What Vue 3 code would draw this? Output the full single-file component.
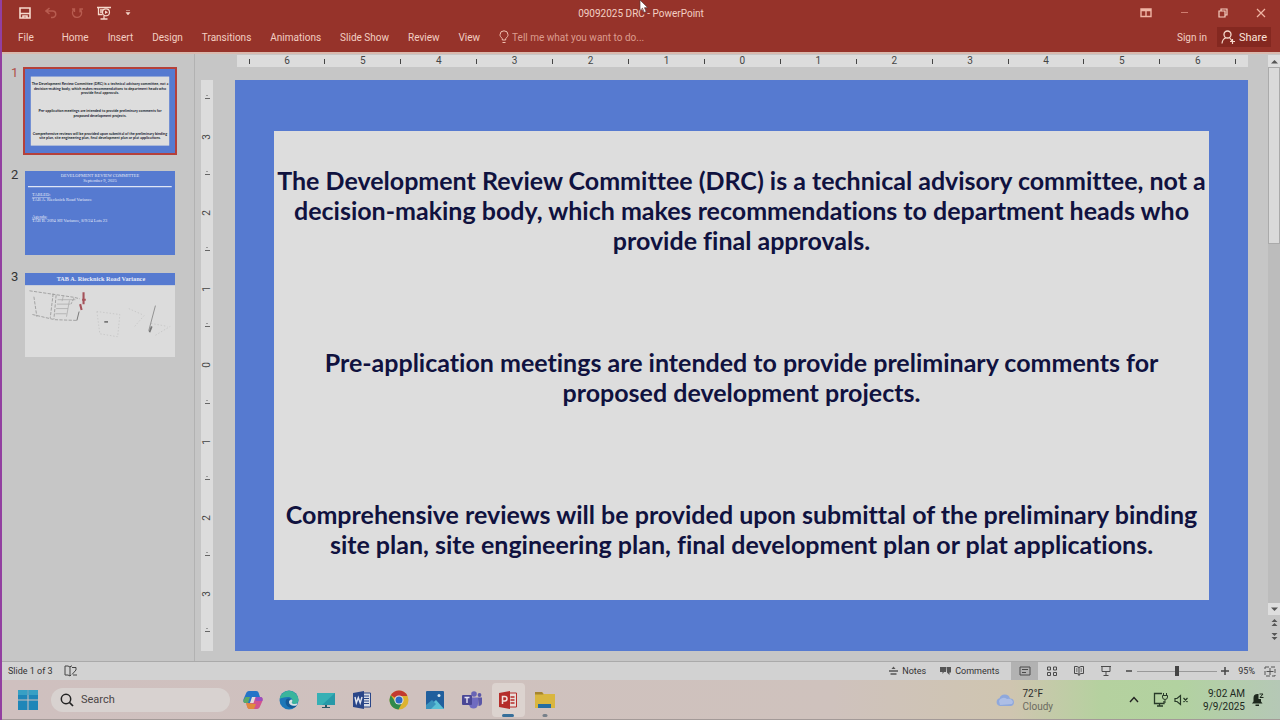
<template>
  <div class="screen">
    <header class="ribbon">
      <div class="titlebar">
        <div class="quick">
          <button aria-label="Save">
            <svg width="12" height="12" viewBox="0 0 12 12"><path d="M1 1h10v10H1z" fill="none" stroke="#f6d9cc" stroke-width="1.600" /><path d="M1 6.500h10M4 11V9h4v2" fill="none" stroke="#f6d9cc" stroke-width="1.600" /></svg>
          </button>
          <button aria-label="Undo">
            <svg width="12" height="12" viewBox="0 0 12 12"><path d="M4.500 1L1 4l3.500 3M1 4h6.500a3 3 0 0 1 0 6.500H6" fill="none" stroke="#b85c50" stroke-width="1.500" /></svg>
          </button>
          <button aria-label="Repeat">
            <svg width="12" height="12" viewBox="0 0 12 12"><path d="M3.500 2A4.600 4.600 0 1 0 9 2.300M9 5.500V2h3M3.500 5V2H1" fill="none" stroke="#b85c50" stroke-width="1.300" /></svg>
          </button>
          <button aria-label="Start from beginning">
            <svg width="14" height="14" viewBox="0 0 14 14"><path d="M0 1.500h14M1.500 2v6.500h4M7 10v2.500M3.500 13h7M3 4h4M3 6h2" fill="none" stroke="#f6d9cc" stroke-width="1.300" /><circle cx="9" cy="6.300" r="3.500" fill="#96332a" stroke="#f6d9cc" stroke-width="1.200" /><path d="M8 4.500l3 1.800-3 1.800z" fill="#f6d9cc" /></svg>
          </button>
          <button aria-label="Customize toolbar">
            <svg width="6" height="6" viewBox="0 0 6 6"><path d="M1 .5h4M1 2.500h4L3 5z" fill="#f6d9cc" stroke="#f6d9cc" stroke-width=".5" /></svg>
          </button>
        </div>
        <h1>09092025 DRC - PowerPoint</h1>
        <div class="window-buttons">
          <button aria-label="Ribbon display options">
            <svg width="12" height="10" viewBox="0 0 12 10"><path d="M1 1h10v7.500H1zM1 2.500h10M6 3v6" fill="none" stroke="#f0b5a5" stroke-width="1.400" /></svg>
          </button>
          <button aria-label="Minimize">
            <svg width="10" height="10" viewBox="0 0 10 10"><path d="M1 4.500h7" stroke="#cf7d70" /></svg>
          </button>
          <button aria-label="Restore">
            <svg width="10" height="10" viewBox="0 0 10 10"><path d="M1 3h6v6H1zM3 3V1h6v6H7" fill="none" stroke="#f6d0c2" stroke-width="1.200" /></svg>
          </button>
          <button aria-label="Close">
            <svg width="10" height="10" viewBox="0 0 10 10"><path d="M1 1l8 8M9 1L1 9" stroke="#f0b5a5" stroke-width="1.200" /></svg>
          </button>
        </div>
      </div>
      <nav class="tabs">
        <button v-for="tab in tabs" :key="tab" class="tab">{{ tab }}</button>
        <label class="tell">
          <svg width="10" height="14" viewBox="0 0 10 14"><path d="M3.300 10V8.500C1.500 7 1 6 1 4.800a4 4 0 0 1 8 0C9 6 8.500 7 6.700 8.500V10zM3.500 12.500h3" fill="none" stroke="#f0c0b0" /></svg>
          <input type="text" placeholder="Tell me what you want to do..." />
        </label>
        <button class="tab">Sign in</button>
        <button class="share">
          <svg width="15" height="14" viewBox="0 0 15 14"><circle cx="6.500" cy="4.500" r="3.500" fill="none" stroke="#f6d9cc" stroke-width="1.300" /><path d="M1 13.500c.3-3 1.800-5 4-5.700M8.500 7.500L11 11M9 11.500h5M11.500 9v5" fill="none" stroke="#f6d9cc" stroke-width="1.200" /></svg>
          Share
        </button>
      </nav>
      <svg class="cursor" width="9" height="14" viewBox="0 0 9 14"><path d="M1 0v10.500l2.500-2.200L5.200 12.500l2-.9L5.500 7.700H8.800z" fill="#fff" stroke="#5b3a38" stroke-width=".7" /></svg>
    </header>

    <main class="workspace">
      <aside class="thumbs">
        <div class="thumb-row">
          <span>1</span>
          <button class="thumb active" aria-label="Slide 1">
            <svg viewBox="0 0 1012 568">
              <rect width="1012" height="568" fill="#567ad0" />
              <rect x="39" y="51" width="934" height="466" fill="#dddddd" />
              <g class="mini-text">
                <text v-for="line in miniLines" :key="line.text" x="506" :y="line.y">{{ line.text }}</text>
              </g>
            </svg>
          </button>
        </div>
        <div class="thumb-row">
          <span>2</span>
          <button class="thumb" aria-label="Slide 2">
            <svg viewBox="0 0 1012 568">
              <rect width="1012" height="568" fill="#567ad0" />
              <g class="mini-serif">
                <text x="506" y="38" text-anchor="middle">DEVELOPMENT REVIEW COMMITTEE</text>
                <text x="506" y="76" text-anchor="middle">September 9, 2025</text>
                <text x="48" y="170" text-decoration="underline">TABLED:</text>
                <text x="48" y="202">TAB A. Riecknick Road Variance</text>
                <text x="48" y="315" text-decoration="underline">Agenda:</text>
                <text x="48" y="346">TAB B. 2094 SH Variance, 8/9/24 Lots 23</text>
              </g>
              <path d="M20 106h970" stroke="#dfe5f5" stroke-width="8" />
            </svg>
          </button>
        </div>
        <div class="thumb-row">
          <span>3</span>
          <button class="thumb" aria-label="Slide 3">
            <svg viewBox="0 0 1012 568">
              <rect width="1012" height="568" fill="#dcdcdc" />
              <rect width="1012" height="82" fill="#567ad0" />
              <text class="mini-title" x="512" y="56">TAB A.  Riecknick Road Variance</text>
              <g fill="none" stroke="#8f8f8f" stroke-width="5">
                <path d="M30 120l150 22 150 22 40 10M60 160l20 135M50 280l150 35 155 5M190 140l-20 165M210 150l-15 160M330 170l-20 40" stroke-dasharray="22 9" />
                <path d="M220 180h120M215 210h90M210 240h80M205 275h75M260 150l-10 40M300 185l-20 110" stroke="#aaa" />
                <path d="M485 260l20 150 120 20 15-150zM700 240l90 40M740 360l70-80M850 340l110 20M880 420l100-60" stroke="#c2c2c2" stroke-dasharray="10 12" />
                <path d="M880 220l-45 170" stroke="#777" />
                <path d="M365 260l-15 60" stroke="#555" />
              </g>
              <path d="M395 130v80M385 180h25M372 210l10 40" stroke="#a5525a" stroke-width="14" fill="none" />
              <path d="M535 330h25M855 360l-15 40" stroke="#777" stroke-width="12" />
            </svg>
          </button>
        </div>
      </aside>

      <section class="editor">
        <div class="ruler-h">
          <span v-for="(mark, i) in hMarks" :key="i" :class="{ tick: mark === '' }">{{ mark }}</span>
        </div>
        <div class="ruler-v">
          <span v-for="(mark, i) in vMarks" :key="i" :class="{ tick: mark === '' }">{{ mark }}</span>
        </div>
        <article class="slide">
          <div class="paper">
            <p v-for="(lines, i) in paragraphs" :key="i">
              <template v-for="(line, j) in lines" :key="j"><br v-if="j" />{{ line }}</template>
            </p>
          </div>
        </article>
      </section>

      <div class="scroll">
        <button aria-label="Scroll up"><svg width="7" height="5" viewBox="0 0 7 5"><path d="M0 4.500h7L3.500 1z" fill="#555" /></svg></button>
        <div class="track"><div class="handle"></div></div>
        <button aria-label="Scroll down"><svg width="7" height="5" viewBox="0 0 7 5"><path d="M0 .5h7L3.500 4z" fill="#555" /></svg></button>
        <button class="flat" aria-label="Previous slide"><svg width="7" height="9" viewBox="0 0 7 9"><path d="M.5 4L3.500 1l3 3zM.5 8l3-3 3 3z" fill="#555" /></svg></button>
        <button class="flat" aria-label="Next slide"><svg width="7" height="9" viewBox="0 0 7 9"><path d="M.5 1l3 3 3-3zM.5 5l3 3 3-3z" fill="#555" /></svg></button>
      </div>
    </main>

    <footer class="status">
      <span>Slide 1 of 3</span>
      <button aria-label="Spelling">
        <svg width="14" height="12" viewBox="0 0 14 12"><path d="M6 2L4 1H1v9h3l2 1V2l1-1h1M6 11l1-1M8 2.500h4v2.500L8 9.500M9 10h4" fill="none" stroke="#444" /></svg>
      </button>
      <div class="push"></div>
      <button class="text-btn">
        <svg width="9" height="10" viewBox="0 0 9 10"><path d="M0 5h9M1.500 8h6" stroke="#555" stroke-width="1.300" /><path d="M2.500 3h4L4.500.5z" fill="#555" /></svg>
        Notes
      </button>
      <button class="text-btn comments">
        <svg width="11" height="10" viewBox="0 0 11 10"><path d="M0 1h6v5H4L2.500 8V6H0zM6.500 1H11v5.500H9.500v2.500L7 6.500z" fill="#555" /></svg>
        Comments
      </button>
      <div class="views">
        <button class="on" aria-label="Normal"><svg width="12" height="12" viewBox="0 0 12 12"><path d="M1 2h10v8H1zM3 4.500h6M3 7.500h4" fill="none" stroke="#4a4a4a" /></svg></button>
        <button aria-label="Slide sorter"><svg width="12" height="12" viewBox="0 0 12 12"><path d="M1.500 2h3v3h-3zM7.500 2h3v3h-3zM1.500 7.500h3v3h-3zM7.500 7.500h3v3h-3z" fill="none" stroke="#4a4a4a" /></svg></button>
        <button aria-label="Reading view"><svg width="12" height="12" viewBox="0 0 12 12"><path d="M6 2.500L4 1.500H1.500v7H4l2 1 2-1h2.500v-7H8zM6 2.500V11M3 4h1.500M3 6h1.500M7.500 4H9M7.500 6H9" fill="none" stroke="#4a4a4a" /></svg></button>
        <button aria-label="Slide show"><svg width="12" height="12" viewBox="0 0 12 12"><path d="M1 1.500h10M2 2v4.500h8V2M6 6.500v4M3.500 10.500h5" fill="none" stroke="#4a4a4a" /></svg></button>
      </div>
      <div class="zoom">
        <button aria-label="Zoom out"><svg width="8" height="8" viewBox="0 0 8 8"><path d="M1 4h6" stroke="#444" stroke-width="1.500" /></svg></button>
        <input v-model="zoom" type="range" min="0" max="190" aria-label="Zoom" />
        <button aria-label="Zoom in"><svg width="8" height="8" viewBox="0 0 8 8"><path d="M0 4h8M4 0v8" stroke="#444" stroke-width="1.500" /></svg></button>
        <span class="percent">{{ zoom }}%</span>
        <button aria-label="Fit slide"><svg width="12" height="11" viewBox="0 0 12 11"><path d="M1 1h10v9H1z" fill="none" stroke="#555" stroke-dasharray="4 2" /><path d="M6 2v7M2.500 5.500h7" stroke="#555" /></svg></button>
      </div>
    </footer>

    <div class="taskbar">
      <button class="app" aria-label="Start">
        <svg width="20" height="20" viewBox="0 0 20 20"><path d="M0 0h9.500v9.500H0zM10.500 0H20v9.500h-9.500zM0 10.500h9.500V20H0zM10.500 10.500H20V20h-9.500z" fill="#1f86b8" /><path d="M0 0h9.500v5H0zM10.500 0H20v5h-9.500z" fill="#38a0c4" /></svg>
      </button>
      <label class="search">
        <svg width="14" height="14" viewBox="0 0 14 14"><circle cx="6" cy="6" r="4.700" fill="none" stroke="#222" stroke-width="1.500" /><path d="M9.500 9.500L13 13" stroke="#222" stroke-width="1.700" /></svg>
        <input type="text" placeholder="Search" />
      </label>
      <div class="apps">
        <button class="app" aria-label="Copilot">
          <svg width="20" height="20" viewBox="0 0 20 20"><path d="M6 1h7c2 0 2.500 1 3 3l1 3h-4L8 13H2.500C.5 13 0 11 .6 9L3 3.500C3.500 2 4.500 1 6 1z" fill="#2474c8" /><path d="M2.500 7L.6 10c-.6 2 0 3 1.900 3H5l2-6z" fill="#5ca868" /><path d="M14 19H7c-2 0-2.500-1-3-3l-.8-3h4L12 7h5.500c2 0 2.500 2 1.900 4L17 16.500C16.500 18 15.500 19 14 19z" fill="#d15390" /><path d="M3.200 13c.8 4 1.300 6 3.800 6h4l2-5z" fill="#e08a3c" /><path d="M13 7h4.500c2 0 2.500 2 1.900 4h-7z" fill="#9a4fc0" /><path d="M9 7h3.500l-2 6H7z" fill="#e6dcdc" /></svg>
        </button>
        <button class="app" aria-label="Edge">
          <svg width="20" height="20" viewBox="0 0 20 20"><circle cx="10" cy="10" r="9.500" fill="#1c77b8" /><path d="M.6 9A9.500 9.500 0 0 1 19.500 10c0 3-2.500 4.500-5 4-2-.4-2-1.500-1.300-2.500C14 9.500 12.500 7 9 7 5 7 2 8 .6 9z" fill="#3bb59c" /><path d="M7 10c-1.500 4 1.500 8 6 8 2 0 4-1 5-3-4 2-8 0-8-3 0-1.500 1-2 2-2.500C10.500 8 8 8 7 10z" fill="#155a96" /><path d="M10 12c0-1.500 1-2 2-2.500 1.300.3 1.800 1.200 1.200 2-.7 1-.7 2.100 1.300 2.500 1.500.3 3 0 4-1l-.7 2.200C14.500 16.500 10 15.500 10 12z" fill="#d8e3e3" /></svg>
        </button>
        <button class="app" aria-label="Remote desktop">
          <svg width="20" height="20" viewBox="0 0 20 20"><path d="M1 3h18v12H1z" fill="#2799a8" /><path d="M1 3h18L6 15H1z" fill="#36b0b5" /><path d="M9 15h2v2h3v1H6v-1h3z" fill="#2a5667" /></svg>
        </button>
        <button class="app" aria-label="Word">
          <svg width="20" height="20" viewBox="0 0 20 20"><path d="M10 3h8.500v14H10z" fill="#d9dde6" stroke="#2a4688" /><path d="M12 6h5M12 8.500h5M12 11h5M12 13.500h5" stroke="#2a4688" /><path d="M1 3l11-2v18L1 17z" fill="#2a4688" /><path d="M3 7l1.300 6L6.300 7.500 8.200 13 10 7" fill="none" stroke="#e4e7f0" stroke-width="1.400" /></svg>
        </button>
        <button class="app" aria-label="Chrome">
          <svg width="20" height="20" viewBox="0 0 20 20"><circle cx="10" cy="10" r="9.500" fill="#dcb32f" /><path d="M10 10L1.800 5.200A9.500 9.500 0 0 1 18.200 5.200L18 6h-8z" fill="#c23a30" /><path d="M1.800 5.200A9.500 9.500 0 0 0 9.500 19.500L13.500 12 10 10 6.500 12z" fill="#318a4c" /><circle cx="10" cy="10" r="4.600" fill="#e2e2e2" /><circle cx="10" cy="10" r="3.500" fill="#2c69c4" /></svg>
        </button>
        <button class="app" aria-label="Photos">
          <svg width="20" height="20" viewBox="0 0 20 20"><rect x="1" y="1" width="18" height="18" rx="1" fill="#215f9d" /><path d="M1 19l10-9 8 9z" fill="#5bc0d5" /><path d="M1 15l6-5 4 4-5 5H1z" fill="#3a93bd" /><circle cx="14" cy="5.500" r="1.500" fill="#dce9f0" /></svg>
        </button>
        <button class="app" aria-label="Teams">
          <svg width="20" height="20" viewBox="0 0 20 20"><circle cx="12" cy="4" r="2.800" fill="#6964b5" /><circle cx="17.500" cy="5" r="1.900" fill="#5b57a8" /><path d="M7 7.500h9V14a4.500 4.500 0 0 1-9 0z" fill="#6f6bc0" /><path d="M16 7.500h4V13c0 2-1.500 3-3.500 3z" fill="#5b57a8" /><rect y="5" width="10" height="10" rx="1" fill="#4a4796" /><path d="M2.500 7.500h5M5 7.500v5.500" stroke="#e4e2f2" stroke-width="1.400" /></svg>
        </button>
        <button class="app running" aria-label="PowerPoint">
          <svg width="20" height="20" viewBox="0 0 20 20"><path d="M10 3h8.500v14H10z" fill="#e8dcd8" stroke="#b52d2a" /><path d="M12.500 7h4M12.500 10h4M12.500 13h4" stroke="#b52d2a" stroke-width="1.300" /><path d="M1 3l11-2v18L1 17z" fill="#b52d2a" /><path d="M4.500 14V6.500h2.300a2.200 2.200 0 0 1 0 4.400H4.500" fill="none" stroke="#f2e2dd" stroke-width="1.500" /></svg>
        </button>
        <button class="app open" aria-label="File Explorer">
          <svg width="20" height="20" viewBox="0 0 20 20"><path d="M0 2h7l2 2h11v14H0z" fill="#d9b63f" /><path d="M0 2h7l1.500 2.500H0z" fill="#a6852e" /><path d="M3 14h13v4H3z" fill="#246da3" /></svg>
        </button>
      </div>
      <div class="push"></div>
      <button class="weather">
        <svg width="20" height="14" viewBox="0 0 20 14"><path d="M5 13a4 4 0 0 1-.5-7.800A5.500 5.500 0 0 1 15 5.500 3.800 3.800 0 0 1 16 13z" fill="#8fa8dc" /><path d="M4 8a5 5 0 0 1 8-2 5 5 0 0 1 6 3l-1 2-12 1z" fill="#b9c8ea" opacity=".7" /></svg>
        <span>72°F<br /><i>Cloudy</i></span>
      </button>
      <div class="tray">
        <button aria-label="Show hidden icons"><svg width="10" height="7" viewBox="0 0 10 7"><path d="M1 6l4-4.500L9 6" fill="none" stroke="#222" stroke-width="1.400" /></svg></button>
        <button aria-label="Network"><svg width="15" height="15" viewBox="0 0 15 15"><path d="M9 1.500H1.500v10H11V9M4 14h6M6.500 12v2" fill="none" stroke="#283a28" stroke-width="1.300" /><path d="M10.500 1v2M13.500 1v2M9.500 3.500h5v1.500a2.500 2.500 0 0 1-5 0zM12 8v3" fill="none" stroke="#283a28" /></svg></button>
        <button aria-label="Muted"><svg width="15" height="12" viewBox="0 0 15 12"><path d="M1 4.500h2l3.500-3v9L3 7.500H1zM9.500 4l4 4M13.500 4l-4 4" fill="none" stroke="#283a28" stroke-width="1.200" /></svg></button>
        <time>9:02 AM<br />9/9/2025</time>
        <button aria-label="Notifications"><svg width="13" height="14" viewBox="0 0 13 14"><path d="M1 10.500l1.500-2V5a4 4 0 0 1 4-4h1v5H10v2.500l1.500 2zM4.500 11.500h3.500v1.500H4.500z" fill="#1d281d" /><path d="M8.500 1h3.500L9 4.500h3.500" fill="none" stroke="#1d281d" /></svg></button>
      </div>
    </div>
  </div>
</template>

<script setup>
import { ref } from 'vue'

const tabs = ['File', 'Home', 'Insert', 'Design', 'Transitions', 'Animations', 'Slide Show', 'Review', 'View']

const paragraphs = [
  [
    'The Development Review Committee (DRC) is a technical advisory committee, not a',
    'decision-making body, which makes recommendations to department heads who',
    'provide final approvals.'
  ],
  [
    'Pre-application meetings are intended to provide preliminary comments for',
    'proposed development projects.'
  ],
  [
    'Comprehensive reviews will be provided upon submittal of the preliminary binding',
    'site plan, site engineering plan, final development plan or plat applications.'
  ]
]

// same text for the thumbnail, four line slots between paragraphs
const miniLines = []
let y = 110
for (const lines of paragraphs) {
  for (const text of lines) {
    miniLines.push({ text, y })
    y += 30
  }
  y += 92
}

// numbered inches with a half-inch tick between them
function marks(max) {
  const list = ['']
  for (let n = -max; n <= max; n++) list.push(String(Math.abs(n)), '')
  return list
}
const hMarks = marks(6)
const vMarks = marks(3)

const zoom = ref(95)
</script>

<style>
body { background:#c6c6c6; }
</style>

<style scoped>
.screen {
  height:100vh; display:flex; flex-direction:column; box-sizing:border-box; overflow:hidden;
  border-left:2px solid #923fa0; background:#c6c6c6; color:#333;
  font-family:Roboto, "Open Sans", sans-serif; font-size:10px;
}
button { border:0; padding:0; background:none; font:inherit; color:inherit; display:flex; align-items:center; justify-content:center; white-space:nowrap; }
input { font:inherit; border:0; padding:0; background:none; min-width:0; }
svg { display:block; flex:none; }

.ribbon { position:relative; background:#96332a; color:#f3cfc3; border-bottom:2px solid #d9b9ae; }
.titlebar { display:grid; grid-template-columns:1fr auto 1fr; align-items:center; height:26px; }
.titlebar h1 { margin:0; font-size:10px; font-weight:400; }
.quick { display:flex; align-items:center; gap:14px; padding-left:17px; }
.window-buttons { display:flex; justify-content:flex-end; gap:28px; padding-right:14px; }
.tabs { display:flex; align-items:center; height:22px; padding:0 9px 4px 16px; gap:19px; }
.tab:first-child { margin-right:9px; }
.tell { display:flex; align-items:center; gap:3px; flex:1; }
.tell input { flex:1; }
.tell input::placeholder { color:#dc9c8e; opacity:1; }
.share { background:#842820; height:20px; padding:0 4px; gap:3px; margin-left:-9px; font-size:11px; color:#fbe3da; }
.cursor { position:absolute; left:50%; top:0; margin-left:-2px; }

.workspace { flex:1; display:flex; min-height:0; }
.thumbs { width:193px; flex:none; box-sizing:border-box; border-right:1px solid #b2b2b2; padding:15px 0 0 9px; display:flex; flex-direction:column; gap:18px; }
.thumb-row { display:flex; gap:6px; }
.thumb-row span { width:8px; font-size:13px; line-height:8px; }
.thumb-row:first-child span { color:#b0504a; }
.thumb { width:150px; height:84px; outline:0; }
.thumb svg { width:100%; }
.thumb.active { box-shadow:0 0 0 2px #b5403a; }
.mini-text { font-family:Lato, sans-serif; font-size:25px; font-weight:700; fill:#20242f; text-anchor:middle; }
.mini-serif { font-family:"Liberation Serif", serif; font-size:30px; fill:#e4e9f7; }
.mini-title { font-family:"Liberation Serif", serif; font-size:42px; font-weight:700; fill:#e4e9f7; text-anchor:middle; }

.editor {
  flex:1; min-width:0; display:grid; grid-template-columns:12px 1fr; grid-template-rows:12px 1fr;
  column-gap:22px; row-gap:13px; padding:1px 20px 10px 6px;
}
.ruler-h { grid-column:2; display:flex; justify-content:space-between; align-items:center; padding:0 8px; margin-left:2px; background:#dcdcdc; }
.ruler-h span, .ruler-v span { width:8px; height:8px; line-height:8px; text-align:center; font-size:10px; color:#444; }
.ruler-h .tick { background:linear-gradient(#444, #444) center / 1px 5px no-repeat; }
.ruler-v { display:flex; flex-direction:column; justify-content:space-between; align-items:center; padding:15px 0; background:#dcdcdc; }
.ruler-v span { transform:rotate(-90deg); }
.ruler-v .tick { background:linear-gradient(#666, #666) center / 1px 5px no-repeat, linear-gradient(#999, #999) 100% 50% / 1px 2px no-repeat; }
.slide { background:#567ad0; padding:51px 39px; display:flex; }
.paper { flex:1; background:#dddddd; display:flex; flex-direction:column; gap:92px; padding-top:34px; text-align:center; }
.paper p { margin:0; font-family:Lato, "Open Sans", sans-serif; font-size:25px; font-weight:700; font-variant-ligatures:none; line-height:30px; color:#10123f; white-space:nowrap; }

.scroll { width:12px; flex:none; display:flex; flex-direction:column; padding:1px 0 18px; }
.scroll button { height:12px; background:#dedede; }
.scroll .flat { background:none; height:14px; }
.track { flex:1; background:#bcbcbc; }
.handle { height:33%; background:#dadada; border:1px solid #aaa; box-sizing:border-box; }

.status { display:flex; align-items:center; height:18px; flex:none; border-top:1px solid #aaa; background:#d2d2d2; padding-left:6px; font-size:9px; }
.status > button:first-of-type { margin-left:11px; }
.push { flex:1; }
.text-btn { gap:4px; }
.comments { margin:0 12px 0 14px; }
.views { display:flex; align-self:stretch; }
.views button { width:27px; }
.views .on { background:#b2b2b2; }
.zoom { display:flex; align-items:center; gap:4px; padding:0 4px 0 6px; }
.zoom input { appearance:none; width:80px; height:12px; margin:0; background:linear-gradient(#999, #999) center / 100% 1px no-repeat; }
.zoom input::-webkit-slider-thumb { appearance:none; width:4px; height:10px; background:#444; }
.percent { margin:0 5px; }

.taskbar {
  display:flex; align-items:center; height:39px; flex:none; padding:0 16px; border-bottom:1px solid #a39a98;
  background:linear-gradient(90deg, #cfc0bf 0%, #cfc2bd 65%, #cfc5b0 79%, #b5d19f 86%, #b2d2a0 92%, #b5c8b6 100%);
}
.search { display:flex; align-items:center; gap:7px; width:170px; height:24px; border-radius:12px; background:#d8d2d0; margin-left:13px; padding-left:9px; }
.search input { font-size:11px; flex:1; }
.search input::placeholder { color:#4a4545; opacity:1; }
.apps { display:flex; justify-content:space-between; width:325px; margin-left:6px; }
.apps .app { position:relative; width:33px; height:34px; border-radius:4px; }
.running { background:#dcd3cf; }
.running::after, .open::after { content:""; position:absolute; bottom:0; left:50%; transform:translateX(-50%); width:12px; height:3px; border-radius:2px; background:#366f9a; }
.open::after { width:5px; background:#77808a; }
.weather { gap:7px; text-align:left; line-height:13px; color:#2b2b2b; }
.weather i { font-style:normal; color:#6b6b60; }
.tray { display:flex; align-items:center; gap:6px; margin-left:76px; color:#1d281d; }
.tray button:first-child { margin-right:8px; }
.tray time { margin-left:8px; text-align:right; line-height:13px; }
</style>
